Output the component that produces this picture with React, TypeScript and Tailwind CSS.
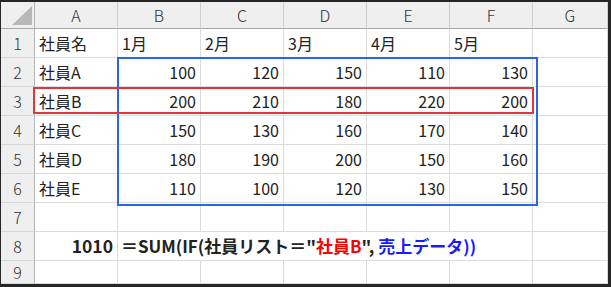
import React from 'react';

const cols = ['A', 'B', 'C', 'D', 'E', 'F', 'G'];

// sheet data, row 1 is the header line of the table
const rows: string[][] = [
  ['社員名', '1月', '2月', '3月', '4月', '5月'],
  ['社員A', '100', '120', '150', '110', '130'],
  ['社員B', '200', '210', '180', '220', '200'],
  ['社員C', '150', '130', '160', '170', '140'],
  ['社員D', '180', '190', '200', '150', '160'],
  ['社員E', '110', '100', '120', '130', '150'],
];

const font = { fontFamily: '"Noto Sans CJK JP", "Noto Sans", sans-serif' };

const headCell = 'flex items-center justify-center bg-[#efefef] border-r border-b border-[#d0d0d0] text-[#333] text-[16px]';
const rowHead = 'flex items-center justify-center bg-[#efefef] border-r border-r-[#b5b5b5] border-b border-b-[#d6d6d6] text-[#333] text-[16px]';
const cell = 'flex items-center border-r border-b border-[#dcdcdc] text-[#222] text-[16px] whitespace-nowrap';

const App = () => {
  return (
    <div
      className="w-[611px] h-[287px] bg-white border-t-2 border-l border-r-[3px] border-b-[3px] border-[#262626] overflow-hidden"
      style={font}
    >
      <div className="relative grid grid-cols-[34px_repeat(6,83px)_75px] grid-rows-[27px_repeat(8,29px)_23px]">
        {/* corner with the select-all triangle */}
        <div className="relative bg-[#efefef] border-r border-b border-r-[#b5b5b5] border-b-[#a9a9a9]">
          <svg className="absolute left-[11px] top-[4px]" width="20" height="19" viewBox="0 0 20 19">
            <polygon points="20,0 20,19 0,19" fill="#b8b8b8" />
          </svg>
        </div>
        {cols.map((c) => (
          <div key={c} className={`${headCell} border-b-[#a9a9a9] font-light`}>
            {c}
          </div>
        ))}

        {rows.map((r, i) => (
          <React.Fragment key={i}>
            <div className={`${rowHead} font-light`}>{i + 1}</div>
            {r.map((v, j) => (
              <div
                key={j}
                className={`${cell} ${j > 0 && i > 0 ? 'justify-end pr-[4px]' : 'pl-[4px]'}`}
              >
                {v}
              </div>
            ))}
            <div className={cell} />
          </React.Fragment>
        ))}

        {/* row 7 */}
        <div className={`${rowHead} font-light`}>7</div>
        {cols.map((c) => (
          <div key={c} className={cell} />
        ))}

        {/* row 8: result and formula */}
        <div className={`${rowHead} font-light`}>8</div>
        <div className={`${cell} justify-end pr-[4px] font-bold text-[17.5px] text-[#111]`}>1010</div>
        <div className={`${cell} col-span-5 pl-[3px] font-bold text-[17px] text-[#111]`}>
          <span>
            ＝SUM(IF(社員リスト＝"<span className="text-[#ff0000]">社員B</span>",{' '}
            <span className="text-[#1a1aff]">売上データ))</span>
          </span>
        </div>
        <div className={cell} />

        {/* row 9 */}
        <div className={`${rowHead} font-light`}>9</div>
        {cols.map((c) => (
          <div key={c} className={cell} />
        ))}

        {/* range outlines */}
        <div className="absolute left-[116px] top-[55px] w-[421px] h-[149px] border-2 border-[#2a66de] pointer-events-none" />
        <div className="absolute left-[32px] top-[85px] w-[501px] h-[27px] border-2 border-[#e2353b] pointer-events-none" />
      </div>
    </div>
  );
};

export default App;
